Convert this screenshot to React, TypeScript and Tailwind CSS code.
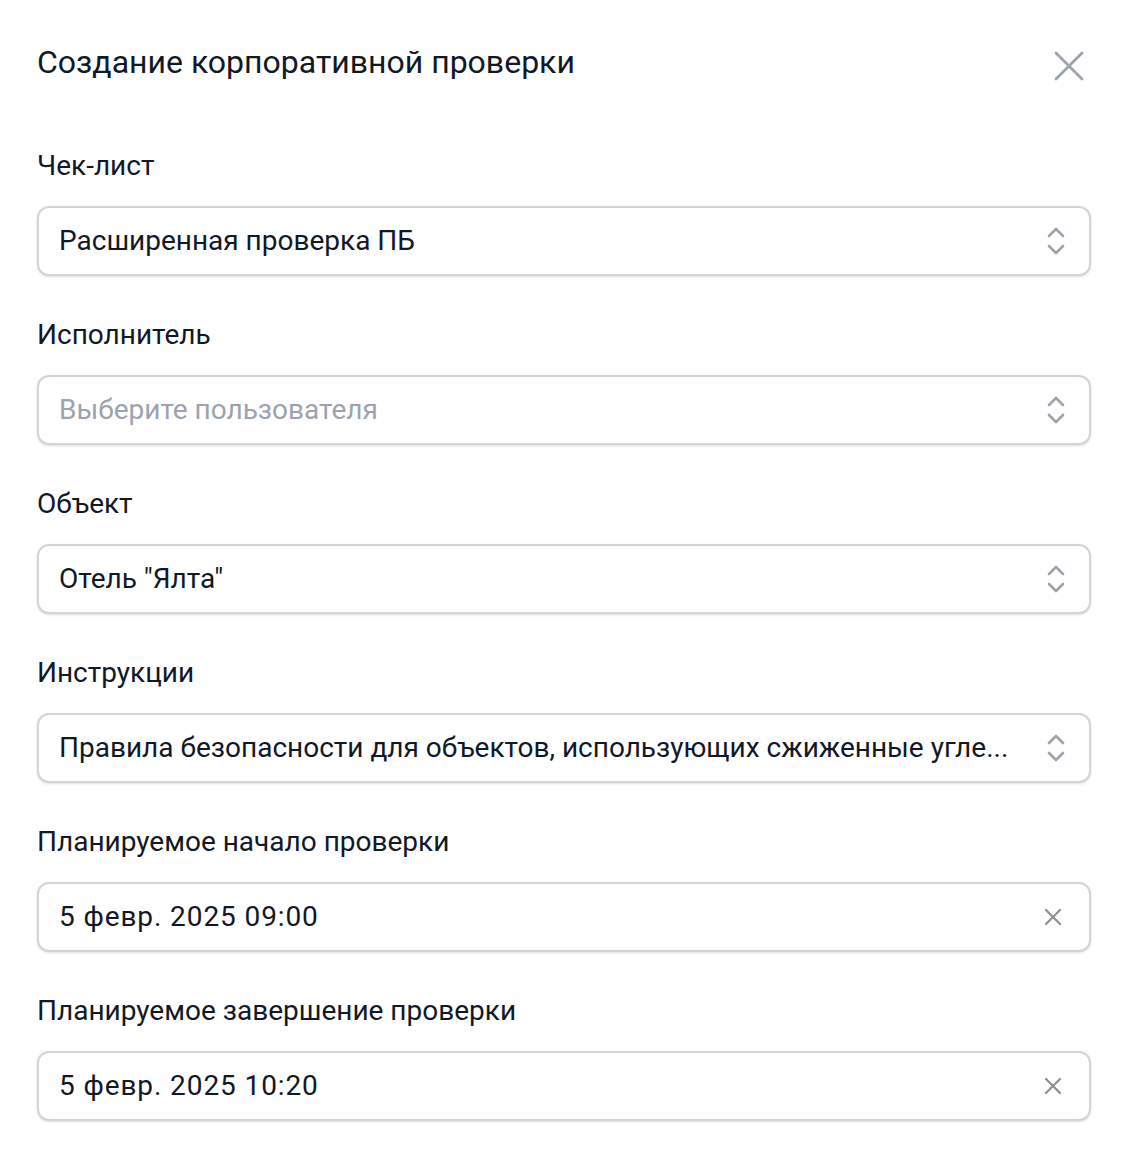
import React from "react";

function UpDown() {
  return (
    <svg width="24" height="34" viewBox="0 0 24 34" fill="none" className="shrink-0">
      <path d="M5 12 L12 5 L19 12" stroke="#9ca3af" strokeWidth="2.6" strokeLinecap="round" strokeLinejoin="round" />
      <path d="M5 22 L12 29 L19 22" stroke="#9ca3af" strokeWidth="2.6" strokeLinecap="round" strokeLinejoin="round" />
    </svg>
  );
}

function SmallX() {
  return (
    <svg width="20" height="20" viewBox="0 0 20 20" fill="none" className="shrink-0 mr-[5px]">
      <path d="M3 3 L17 17 M17 3 L3 17" stroke="#8e8e93" strokeWidth="2.2" strokeLinecap="round" />
    </svg>
  );
}

function Field({
  label,
  value,
  placeholder,
  kind,
}: {
  label: string;
  value?: string;
  placeholder?: string;
  kind: "select" | "date";
}) {
  return (
    <div className="flex flex-col">
      <div className="mt-[2px] h-10 leading-10 text-[28px] font-normal text-[#111827]">{label}</div>
      <div className="mt-[20px] h-[70px] rounded-[12px] border-2 border-[#d1d5db] bg-white shadow-sm flex items-center pl-[20px] pr-[21px] gap-6">
        <div
          className={
            "flex-1 min-w-0 truncate text-[28px] " +
            (kind === "date" ? "tracking-[0.9px] " : "") +
            (value ? "text-[#111827]" : "text-[#9ca3af]")
          }
        >
          {value ?? placeholder}
        </div>
        {kind === "select" ? <UpDown /> : <SmallX />}
      </div>
    </div>
  );
}

export default function App() {
  return (
    <div
      className="w-[1128px] h-[1158px] bg-white px-[37px] pt-[40px]"
      style={{ fontFamily: "Roboto, 'Noto Sans', sans-serif" }}
    >
      <div className="flex items-center justify-between h-11">
        <h1 className="text-[32px] font-normal text-[#111827] leading-[44px]">
          Создание корпоративной проверки
        </h1>
        <svg width="36" height="36" viewBox="0 0 36 36" fill="none" className="mr-[4px] mt-2">
          <path d="M5 5 L31 31 M31 5 L5 31" stroke="#9ca3af" strokeWidth="2.8" strokeLinecap="round" />
        </svg>
      </div>
      <div className="mt-[60px] flex flex-col gap-[37px]">
        <Field label="Чек-лист" value="Расширенная проверка ПБ" kind="select" />
        <Field label="Исполнитель" placeholder="Выберите пользователя" kind="select" />
        <Field label="Объект" value={'Отель "Ялта"'} kind="select" />
        <Field
          label="Инструкции"
          value="Правила безопасности для объектов, использующих сжиженные угле..."
          kind="select"
        />
        <Field label="Планируемое начало проверки" value="5 февр. 2025 09:00" kind="date" />
        <Field label="Планируемое завершение проверки" value="5 февр. 2025 10:20" kind="date" />
      </div>
    </div>
  );
}
